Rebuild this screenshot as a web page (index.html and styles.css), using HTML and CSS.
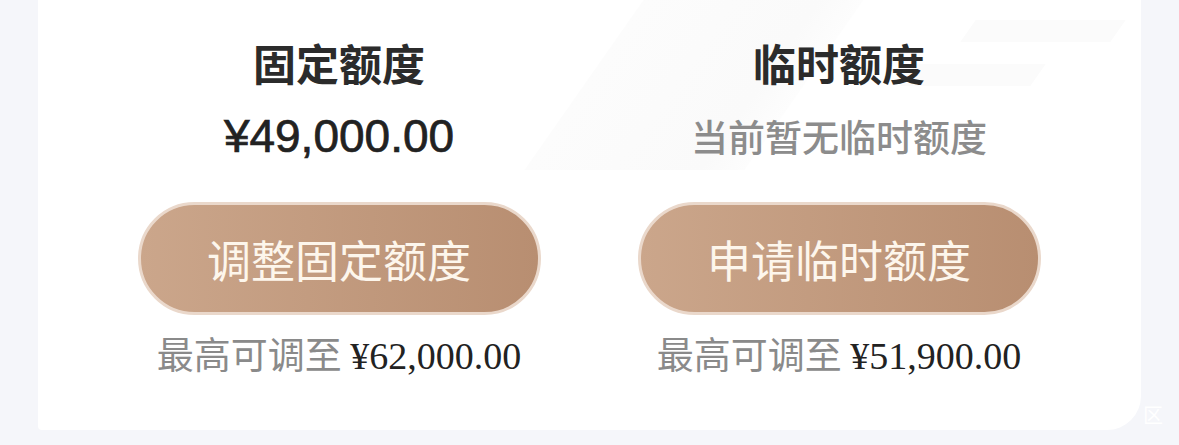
FILE: index.html
```html
<!DOCTYPE html>
<html lang="zh-CN">

<head>
  <meta charset="UTF-8">
  <meta name="viewport" content="width=device-width, initial-scale=1.0">
  <title>额度管理</title>
  <link rel="stylesheet" href="styles.css">
</head>

<body>

  <div class="card">
    <div class="deco deco-a"></div>
    <div class="deco deco-b"></div>
    <div class="deco deco-c"></div>

    <div class="limit">
      <div class="limit-title">固定额度</div>
      <div class="limit-amount">¥49,000.00</div>
      <button class="limit-btn" type="button">调整固定额度</button>
      <div class="limit-max">最高可调至 <span class="max-num">¥62,000.00</span></div>
    </div>

    <div class="limit">
      <div class="limit-title">临时额度</div>
      <div class="limit-empty">当前暂无临时额度</div>
      <button class="limit-btn" type="button">申请临时额度</button>
      <div class="limit-max">最高可调至 <span class="max-num">¥51,900.00</span></div>
    </div>
  </div>

  <span class="corner-tag">区</span>

</body>

</html>
```

FILE: styles.css
```css
body {
  margin: 0;
  height: 445px;
  overflow: hidden;
  background-color: #f5f6fa;
  font-family: "Noto Sans CJK SC", "Noto Sans", sans-serif;
  position: relative;
}

.card {
  position: relative;
  overflow: hidden;
  margin-left: 38px;
  width: 1103px;
  height: 430px;
  box-sizing: border-box;
  padding: 0 52px 0 51px;
  background-color: #fff;
  border-radius: 0 0 34px 4px;
  display: grid;
  grid-template-columns: 1fr 1fr;
}

/* faint background stripes */
.deco {
  position: absolute;
  background-color: #fbfbfb;
  transform: skewX(-35deg);
}

.deco-a {
  left: 560px;
  top: -40px;
  width: 220px;
  height: 210px;
  background: linear-gradient(90deg, #fcfcfc, #fafafa 80%, #fdfdfd);
}

.deco-b {
  left: 930px;
  top: 20px;
  width: 150px;
  height: 22px;
}

.deco-c {
  left: 870px;
  top: 64px;
  width: 130px;
  height: 22px;
}

.limit {
  position: relative;
  display: flex;
  flex-direction: column;
  align-items: center;
}

.limit-title {
  margin-top: 37px;
  font-size: 43px;
  line-height: 50px;
  font-weight: 700;
  color: #2b2b2b;
}

.limit-amount {
  margin-top: 23px;
  height: 52px;
  font-family: "Liberation Sans", Arial, sans-serif;
  font-size: 46px;
  line-height: 52px;
  color: #222;
  -webkit-text-stroke: 0.7px #222;
}

.limit-empty {
  margin-top: 23px;
  height: 52px;
  font-size: 37px;
  line-height: 52px;
  font-weight: 500;
  color: #8c8c8c;
}

.limit-btn {
  margin-top: 40px;
  width: 403px;
  height: 113px;
  border: 3px solid #ead8cb;
  border-radius: 57px;
  background: linear-gradient(90deg, #cba68b, #b88e71);
  color: #fdf6ec;
  font-family: "Noto Sans CJK SC", sans-serif;
  font-size: 44px;
  cursor: pointer;
}

.limit-max {
  margin-top: 16px;
  font-size: 37px;
  line-height: 44px;
  color: #8a8a8a;
}

.max-num {
  font-family: "Liberation Serif", serif;
  font-size: 38px;
  color: #222;
}

.corner-tag {
  position: absolute;
  left: 1143px;
  top: 400px;
  font-size: 20px;
  color: #fff;
}
```
